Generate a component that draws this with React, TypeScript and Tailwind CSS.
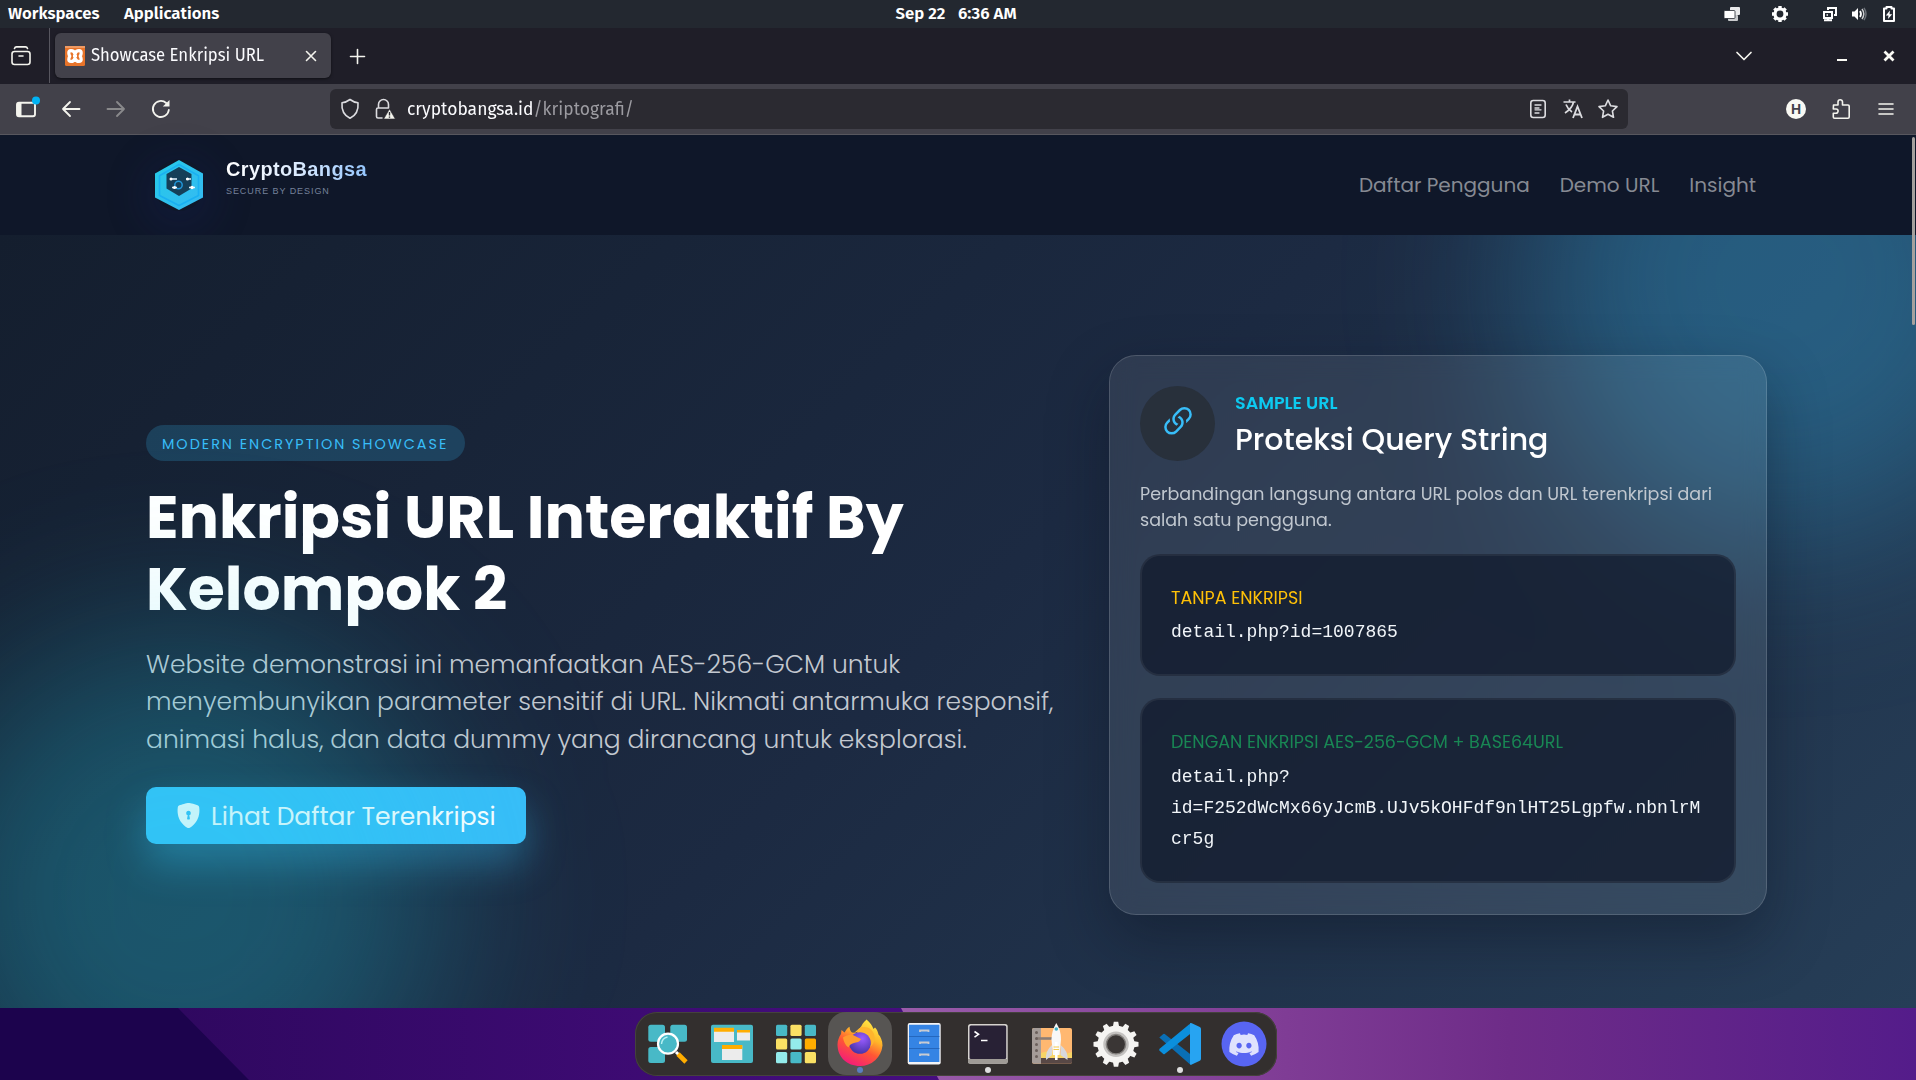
import type { ReactNode } from 'react'
import { BsLink45Deg, BsShieldLockFill } from 'react-icons/bs'
import { FaDiscord } from 'react-icons/fa'

const line = { fill: 'none', stroke: '#f4f4ee', strokeWidth: 1.6, strokeLinecap: 'round', strokeLinejoin: 'round' } as const

function TopBar() {
  return (
    <div className="grid h-7 grid-cols-[1fr_auto_1fr] items-center bg-[#232830] text-[16.800px] leading-[26px] font-semibold text-white">
      <div className="flex gap-[24.500px] pb-0.5 pl-2">
        <span>Workspaces</span>
        <span>Applications</span>
      </div>
      <div className="flex gap-[12.500px] pr-[4px] pb-0.5">
        <span>Sep 22</span>
        <span>6:36 AM</span>
      </div>
      <div className="flex items-center justify-end pr-[20px]">
        <svg width="16" height="16" viewBox="0 0 16 16" className="mr-8">
          <rect x="6" y="1" width="10" height="8" rx="1" fill="#e8e9ea" />
          <rect x="4" y="9" width="10" height="6" rx="1" fill="#c9cbcd" />
          <rect x="0" y="4.500" width="11" height="8" rx="1" fill="#fff" stroke="#232830" strokeWidth=".8" />
        </svg>
        <svg width="16" height="16" viewBox="-8 -8 16 16" className="mr-[34px]">
          <circle r="5" fill="none" stroke="#fff" strokeWidth="3.200" />
          {[0, 45, 90, 135].map((a) => (
            <path key={a} d="M0-8V-5.500M0 5.500V8" stroke="#fff" strokeWidth="3.400" transform={`rotate(${a})`} />
          ))}
        </svg>
        <svg width="16" height="16" viewBox="0 0 16 16" className="mr-[14px]" fill="none" stroke="#fff" strokeWidth="2">
          <path d="M6 4V2h8v7h-2" />
          <rect x="2" y="6" width="8" height="6" />
          <path d="M2 14.200h8M6 12v2" />
          <path d="M4.500 9h1.500" strokeWidth="1.500" />
        </svg>
        <svg width="16" height="16" viewBox="0 0 16 16" className="mr-[14px]">
          <path d="M0 5.500h2.500L6 2v12l-3.500-3.500H0z" fill="#fff" />
          <path d="M8 5q2 3 0 6" fill="none" stroke="#fff" strokeWidth="1.800" />
          <path d="M10 3q3.600 5 0 10" fill="none" stroke="#c9cbcd" strokeWidth="1.500" />
          <path d="M12 1.800q4 6.200 0 12.400" fill="none" stroke="#6b7077" strokeWidth="1.500" />
        </svg>
        <svg width="14" height="16" viewBox="0 0 14 16">
          <path d="M4.500 1h5v1.500H12V15H2V2.500h2.500z" fill="none" stroke="#fff" strokeWidth="2" strokeLinejoin="round" />
          <path d="M8 4.500L3.800 9.500h2.700L6 13l4.200-4.800H7.500z" fill="#fff" />
        </svg>
      </div>
    </div>
  )
}

function TabStrip() {
  return (
    <div className="flex h-14 bg-[#1f1e28]">
      <div className="flex h-[55px] w-[50px] shrink-0 items-center justify-end border-r border-[#57565f] pr-[17px]">
        <svg width="22" height="22" viewBox="0 0 22 22" className="mt-px">
          <rect x="2" y="6.500" width="18" height="13" rx="2.500" {...line} />
          <path d="M4.500 3.500q.5-1.600 2-1.600h9q1.500 0 2 1.600M9 11h4" {...line} />
        </svg>
      </div>
      <div className="mt-[5px] ml-[5px] flex h-[45px] w-[276px] items-center rounded-[6px] bg-[#42414a] pl-[10px] shadow-[0_1px_3px_rgba(0,0,0,.5)]">
        <svg width="20" height="20" viewBox="0 0 20 20">
          <rect width="20" height="20" rx="1.500" fill="#e8742a" />
          <rect width="20" height="2" fill="#ee9a63" />
          <g fill="none" stroke="#fff" strokeWidth="3.200" strokeLinejoin="round">
            <path d="M10 8q-1-3.300-4-3.300-2.200 0-2.200 2.200 0 1.600 1 3.200-1 1.600-1 3.200 0 2.200 2.200 2.200 3 0 4-3.300 1 3.300 4 3.300 2.200 0 2.200-2.200 0-1.600-1-3.200 1-1.600 1-3.200 0-2.200-2.200-2.200-3 0-4 3.300z" />
            <path d="M8 10h4" strokeWidth="2.500" />
          </g>
        </svg>
        <span className="mt-px ml-[6px] flex-1 scale-y-[1.07] text-[16.700px] text-[#fbfbfe]">Showcase Enkripsi URL</span>
        <svg width="12" height="12" viewBox="0 0 12 12" className="mr-[14.500px]">
          <path d="M1.500 1.500l9 9M10.500 1.500l-9 9" {...line} />
        </svg>
      </div>
      <svg width="17" height="17" viewBox="0 0 17 17" className="mt-5 ml-[18px]">
        <path d="M8.500 1.500v14M1.500 8.500h14" {...line} />
      </svg>
      <div className="flex flex-1 items-center justify-end pr-[21px]">
        <svg width="18" height="12" viewBox="0 0 18 12" className="mr-[84px]">
          <path d="M2 2.500l7 7 7-7" {...line} strokeWidth="1.700" />
        </svg>
        <span className="mt-2 mr-9 h-[2.500px] w-[10px] bg-[#fafaf5]" />
        <svg width="12" height="12" viewBox="0 0 12 12">
          <path d="M1.500 1.500l9 9M10.500 1.500l-9 9" fill="none" stroke="#fafaf5" strokeWidth="2.800" />
        </svg>
      </div>
    </div>
  )
}

function Toolbar() {
  return (
    <div className="flex h-[51px] items-center border-b border-[#58575e] bg-[#42414a]">
      <div className="flex w-[330px] shrink-0 items-center pl-[14px]">
        <svg width="28" height="24" viewBox="0 0 28 24" className="mb-[3px]">
          <rect x="3" y="6.800" width="18" height="13.500" rx="2" {...line} strokeWidth="1.900" />
          <path d="M3 7h4.500v13H3z" fill="#f4f4ee" />
          <circle cx="22" cy="4.500" r="4" fill="#00b3f4" />
        </svg>
        <svg width="20" height="18" viewBox="0 0 20 18" className="ml-[19px]">
          <path d="M18.500 9H2M9 2L2 9l7 7" {...line} strokeWidth="1.800" />
        </svg>
        <svg width="20" height="18" viewBox="0 0 20 18" className="ml-[25px] opacity-40">
          <path d="M1.500 9H18M11 2l7 7-7 7" {...line} strokeWidth="1.800" />
        </svg>
        <svg width="20" height="20" viewBox="0 0 20 20" className="ml-[25px]">
          <path d="M17.800 11a8 8 0 1 1-2.600-7" {...line} strokeWidth="1.800" />
          <path d="M18.500 1v6.500h-6.700z" fill="#f4f4ee" />
        </svg>
      </div>
      <div className="flex h-10 w-[1298px] items-center rounded-[6px] bg-[#2b2a31] pl-[10px]">
        <svg width="20" height="22" viewBox="0 0 20 22">
          <path d="M10 1.500q3.500 2.700 8 3.200 1 11-8 15.600Q1 15.700 2 4.700q4.500-.5 8-3.200z" {...line} stroke="#dcdce0" />
        </svg>
        <svg width="22" height="22" viewBox="0 0 22 22" className="ml-[13.500px]">
          <path d="M4.500 10V6.500a5 5 0 0 1 10 0V10M8 20H4q-1.500 0-1.500-1.500v-7Q2.500 10 4 10h10" {...line} stroke="#dcdce0" />
          <path d="M15.500 11l5.800 10H9.700z" fill="#f4f4ee" stroke="#2b2a31" strokeWidth=".6" />
          <path d="M15.500 14v3.500M15.500 18.600v1.200" stroke="#2b2a31" strokeWidth="1.400" />
        </svg>
        <div className="mt-[2px] ml-[11.500px] flex-1 scale-y-[1.04] text-[17.500px] text-[#fbfbfe]">
          cryptobangsa.id<span className="text-[#9c9ba1]">/kriptografi/</span>
        </div>
        <svg width="20" height="20" viewBox="0 0 20 20" className="mr-[14px]">
          <rect x="2.800" y="1.500" width="14.400" height="17" rx="2.500" {...line} stroke="#dcdce0" />
          <path d="M7 6h6M7 9h4M7 10.800h6M7 14h4" {...line} stroke="#dcdce0" strokeWidth="1.300" />
        </svg>
        <svg width="22" height="22" viewBox="0 0 22 22" className="mr-[13px]" fill="none" stroke="#dcdce0" strokeWidth="1.700">
          <path d="M1.500 4h12M7.500 1.500V4M11.500 4q-1 6-8.500 11M4 6.500q2 5 6 7.500" />
          <path d="M11 20l4.500-11.500L20 20M12.500 16.500h6" strokeWidth="1.800" />
        </svg>
        <svg width="22" height="22" viewBox="0 0 22 22" className="mr-[9px]">
          <path d="M11 2l2.700 5.800 6.300.8-4.600 4.400 1.100 6.300L11 16.200l-5.500 3.100 1.100-6.300L2 8.600l6.300-.8z" {...line} stroke="#dcdce0" />
        </svg>
      </div>
      <div className="flex flex-1 items-center justify-end pr-[22px]">
        <span className="mr-[24px] flex size-5 items-center justify-center rounded-full bg-[#f9f9f4] font-['Liberation_Sans'] text-[14px] leading-none font-bold text-[#42414a]">H</span>
        <svg width="22" height="22" viewBox="0 0 22 22" className="mr-[26px]">
          <path d="M3.500 7H8V4a2.200 2.200 0 0 1 4.500 0v3H18q1.200 0 1.200 1.200V19q0 1.200-1.200 1.200H4.500q-1.200 0-1.200-1.200v-3.800H6a2 2 0 0 0 0-4.200H3.300z" {...line} />
        </svg>
        <svg width="16" height="14" viewBox="0 0 16 14" className="mb-px">
          <path d="M1 2h14M1 7h14M1 12h14" {...line} />
        </svg>
      </div>
    </div>
  )
}

function Logo() {
  return (
    <div className="flex">
      <div className="mt-[24px] size-[52px] rounded-full shadow-[0_10px_36px_14px_rgba(24,34,100,.2)]">
        <svg width="52" height="52" viewBox="0 0 52 52">
          <defs>
            <linearGradient id="hex" x1="0" y1="0" x2="1" y2="1">
              <stop offset="0" stopColor="#25cbe8" />
              <stop offset="1" stopColor="#36b9f2" />
            </linearGradient>
          </defs>
          <path d="M26 1l24 13.500v24L26 51 2 38.500v-24z" fill="url(#hex)" />
          <path d="M26 5.500l19.500 11.200v19.700L26 46.500 6.500 36.400V16.700z" fill="none" stroke="#1ab0f2" strokeWidth="1.600" />
          <path d="M26 8l12.500 7v14.500L26 37l-12.500-7.500V15z" fill="#153f58" />
          <circle cx="25.500" cy="26" r="3.700" fill="none" stroke="#2196d8" strokeWidth="1.500" />
          <g stroke="#e2f5ff" strokeWidth="1.500" fill="#fff">
            <path d="M18 20h6M33 20h5M19 28.500h5M36 28.500h6" />
            <circle cx="18" cy="20" r="1.500" stroke="none" />
            <circle cx="34.500" cy="20" r="1.500" stroke="none" />
            <circle cx="21.500" cy="28.500" r="1.500" stroke="none" />
            <circle cx="39" cy="28.500" r="1.700" stroke="none" />
          </g>
        </svg>
      </div>
      <div className="mt-[22px] ml-[21px] font-['Liberation_Sans']">
        <div className="w-[142px] bg-linear-to-r from-white via-[#dbeafe] to-[#93c5fd] bg-clip-text text-[20px] leading-6 font-bold tracking-[.35px] text-transparent">CryptoBangsa</div>
        <div className="mt-[4px] text-[9px] leading-3 tracking-[.93px] text-[#75819a]">SECURE BY DESIGN</div>
      </div>
    </div>
  )
}

function SampleBox({ label, tone, children }: { label: string; tone: string; children: ReactNode }) {
  return (
    <div className="rounded-[20px] border-2 border-white/6 bg-[#0f172a]/72 px-[29px] pt-[29px] pb-[26px]">
      <div className={`text-[17.500px] leading-[26.250px] ${tone}`}>{label}</div>
      <div className="mt-[6.500px] font-['Liberation_Mono'] text-[18px] leading-[31px] text-[#f1f5f9]">{children}</div>
    </div>
  )
}

function Hero() {
  return (
    <main className="relative isolate flex h-[773px] overflow-hidden bg-linear-135 from-[#141e2e] via-[#1c2a42] to-[#263e57] px-[146px]">
      <div className="pointer-events-none absolute -top-[215px] -right-[125px] -z-10 size-[520px] rounded-full bg-[#38bdf8]/31 blur-[85px]" />
      <div className="mt-[190px] w-[963px]">
        <div className="flex h-9 w-[319px] items-center rounded-full bg-[#38bdf8]/20 pt-[3px] pl-4 text-[14.400px] tracking-[1.970px] whitespace-nowrap text-[#38bdf8]">MODERN ENCRYPTION SHOWCASE</div>
        <h1 className="mt-5 text-[60px] leading-[72px] font-bold text-white">
          Enkripsi URL Interaktif By
          <br />
          Kelompok 2
        </h1>
        <p className="mt-[20.600px] text-[25px] leading-[37.500px] font-light whitespace-nowrap text-[#c3c8d0]">
          Website demonstrasi ini memanfaatkan AES-256-GCM untuk
          <br />
          menyembunyikan parameter sensitif di URL. Nikmati antarmuka responsif,
          <br />
          animasi halus, dan data dummy yang dirancang untuk eksplorasi.
        </p>
        <button className="mt-[29.400px] flex h-[57px] w-[380px] items-center rounded-[10px] bg-[#38bdf8] pt-px pl-[30px] text-[25px] whitespace-nowrap text-white shadow-[0_20px_38px_rgba(56,189,248,.35)]">
          <BsShieldLockFill className="mr-[10px] mb-[2px] size-[25px]" />
          Lihat Daftar Terenkripsi
        </button>
      </div>
      <section className="mt-[120px] h-[560px] w-[658px] shrink-0 rounded-[27px] border border-white/15 bg-white/[.085] p-[30px] shadow-[0_25px_60px_rgba(10,16,30,.38)] backdrop-blur-[12px]">
        <div className="flex items-center gap-5">
          <div className="flex size-[75px] items-center justify-center rounded-full bg-[#28303b]">
            <BsLink45Deg className="mb-[3px] size-[40px] text-[#38bdf8]" />
          </div>
          <div>
            <div className="text-[17.500px] leading-[26.250px] font-semibold text-[#0dcaf0]">SAMPLE URL</div>
            <h2 className="mt-[6px] -mb-px text-[30px] leading-9 font-medium text-white">Proteksi Query String</h2>
          </div>
        </div>
        <p className="mt-5 mb-[20px] text-[17.500px] leading-[26.250px] whitespace-nowrap text-[#c0c7cf]">
          Perbandingan langsung antara URL polos dan URL terenkripsi dari
          <br />
          salah satu pengguna.
        </p>
        <div className="flex flex-col gap-[21.500px]">
          <SampleBox label="TANPA ENKRIPSI" tone="text-[#ffc107]">detail.php?id=1007865</SampleBox>
          <SampleBox label="DENGAN ENKRIPSI AES-256-GCM + BASE64URL" tone="text-[#198754]">
            detail.php?
            <br />
            id=F252dWcMx66yJcmB.UJv5kOHFdf9nlHT25Lgpfw.nbnlrM
            <br />
            cr5g
          </SampleBox>
        </div>
      </section>
      <div className="pointer-events-none absolute -bottom-[147px] -left-[80px] size-[520px] rounded-full bg-[#22d3ee]/28 blur-[90px]" />
    </main>
  )
}

function Cell({ active, dot, children }: { active?: boolean; dot?: string; children: ReactNode }) {
  return (
    <svg width="64" height="63" viewBox="0 0 64 63" className={active ? 'rounded-[18px] bg-[#575553]' : ''}>
      {children}
      {dot && <circle cx="32" cy="58" r="3" fill={dot} />}
    </svg>
  )
}

const grid = ['#48b9c7', '#fae064', '#48b9c7', '#fae064', '#94ebeb', '#ffad00', '#94ebeb', '#48b9c7', '#fae064']

function Dock() {
  return (
    <div className="flex h-[64px] w-[642px] rounded-[22px] bg-[#332f2e] px-px inset-ring inset-ring-[#45423d]">
      <Cell>
        <g fill="#48b9c7">
          <rect x="12.300" y="12.700" width="16.700" height="17" rx="2.500" />
          <rect x="34.300" y="12.700" width="16.700" height="17" rx="2.500" />
          <rect x="12.300" y="35" width="16.700" height="16" rx="2.500" />
        </g>
        <path d="M40 40l3 3" stroke="#fff" strokeWidth="3" />
        <path d="M42 42l8 8" stroke="#ffad00" strokeWidth="4.600" />
        <circle cx="32" cy="31.700" r="10" fill="#48b9c7" stroke="#fff" strokeWidth="2.200" />
        <path d="M25.500 32q.5-6 6-7" fill="none" stroke="#b8f2f4" strokeWidth="1.400" />
      </Cell>
      <Cell>
        <rect x="11" y="12.700" width="42" height="38.300" rx="2" fill="#48b9c7" />
        <path d="M14 16h20v14H14zM37 18.500h13v10H37zM22 33.500h20.300V48H22z" fill="#ececec" />
        <path d="M14 15.700h20v4H14zM37 18h13v2.500H37zM22 33h20.300v4H22z" fill="#ffad00" />
      </Cell>
      <Cell>
        {grid.map((c, i) => (
          <rect key={i} x={12 + (i % 3) * 14.4} y={12.7 + Math.floor(i / 3) * 13.7} width="11.200" height="11.200" rx="1.500" fill={c} />
        ))}
      </Cell>
      <Cell active dot="#5b7fc0">
        <defs>
          <linearGradient id="ffx" x1=".8" y1="0" x2=".3" y2="1">
            <stop offset="0" stopColor="#fff04a" />
            <stop offset=".35" stopColor="#ffb629" />
            <stop offset=".62" stopColor="#ff5634" />
            <stop offset="1" stopColor="#f31a7c" />
          </linearGradient>
          <radialGradient id="ffg" cx=".6" cy=".3" r=".8">
            <stop offset="0" stopColor="#9a5cff" />
            <stop offset="1" stopColor="#3d2f9e" />
          </radialGradient>
        </defs>
        <path d="M38.500 7.500c3.500 3 5.800 6 7 9.500l1.500-1.500c2 2 3 4.500 3.500 7 2 2 4 6 4 11A22.500 22.500 0 0 1 32 54C19 54 9.500 45 9.500 32.500c0-4 1.500-7.500 3.500-10.500l.5-4 3 2.500c1.500-2.500 3-4.500 5-5.700.3 3 1 4.500 2.500 5.700l5 .5c1.500-4 4.500-6.500 5.500-9 .9-1.500 2.500-3 4-4.500z" fill="url(#ffx)" />
        <circle cx="32" cy="31" r="10.800" fill="url(#ffg)" />
        <path d="M15 25.500c5-3.500 9-3.500 12-1.500l6 3c-1 3-4.500 3.500-7 4-3 1-5 2-5.500 4.500-3-2-5-6-5.500-10z" fill="#ff9b2f" />
        <path d="M26 21c4-2.500 10-2 14 1 4 3.300 4.500 9 2 13 6-4 6-13 1-17.500-4-3-9-3-12-1z" fill="#ffb52d" />
      </Cell>
      <Cell>
        <rect x="15.700" y="11" width="33" height="41.500" rx="2" fill="#f4f4f6" />
        <path d="M17 12.700h30.400V50H17z" fill="#3584e4" />
        <path d="M17 24.500h30.400M17 36.500h30.400" stroke="#2467be" strokeWidth="1" />
        <path d="M28 20v-1.500h8.500V20M28 32v-1.500h8.500V32M28 44v-1.500h8.500V44" fill="none" stroke="#c8cbd2" strokeWidth="1.800" />
      </Cell>
      <Cell dot="#dedede">
        <rect x="12" y="12" width="39.700" height="39.700" rx="2.500" fill="#d6d3cf" />
        <path d="M12 47h39.700v2.500q0 2.200-2.500 2.200H14.500Q12 51.700 12 49.500z" fill="#9f9b96" />
        <rect x="13.500" y="13.500" width="36.700" height="33.500" rx="1.500" fill="#282135" />
        <path d="M18.500 19.500l4 2.800-4 2.800M25 28.500h6.500" fill="none" stroke="#fff" strokeWidth="1.600" />
      </Cell>
      <Cell>
        <rect x="12" y="16" width="40" height="35.700" rx="2" fill="#ffb871" />
        <path d="M21 41q8-3 16-.5t15-.5v6H21z" fill="#f8d566" />
        <path d="M21 46h31v4q0 1.700-2 1.700H21z" fill="#584846" />
        <path d="M14 16h7v35.700h-7q-2 0-2-2V18q0-2 2-2z" fill="#a59c98" />
        <path d="M16 26.500h18" stroke="#8a7d76" strokeWidth="2.600" />
        {[20.5, 26.5, 32.5, 38.5, 44.5].map((y) => (
          <circle key={y} cx="16.500" cy={y} r="1.500" fill="#6b605c" />
        ))}
        <path d="M32 33q-7 6-6 15l6-5zM40.500 33q8 6 7 15l-7-5z" fill="#d8d8dc" />
        <path d="M36.300 11q5 8 4.700 16.500L39.500 43h-6.500L31.500 27.500Q31.500 19 36.300 11z" fill="#f8f8f8" />
        <path d="M36.300 30v18" stroke="#fff" strokeWidth="2.600" />
        <circle cx="36.300" cy="17" r="1.800" fill="#3fb2c6" />
        <path d="M33.500 35h5.600M33.500 37.500h5.600" stroke="#f2c94c" strokeWidth="1" />
      </Cell>
      <Cell>
        <g transform="translate(32 32.300)">
          {Array.from({ length: 12 }, (_, i) => (
            <path key={i} d="M-3.200-17L-2.200-22.500H2.200L3.200-17z" fill="#f5f4f2" transform={`rotate(${i * 30})`} />
          ))}
          <circle r="14" fill="none" stroke="#f5f4f2" strokeWidth="9" />
          <circle r="11.500" fill="none" stroke="#c4c2c0" strokeWidth="2.500" />
          <circle r="9.700" fill="#3a3635" stroke="#85827f" strokeWidth="1.500" />
        </g>
      </Cell>
      <Cell dot="#dedede">
        <path d="M11.300 25.500l4-3.500q.7-.5 1.400 0L44 43.500V52q-1.500.8-3-.6L11.300 25.500z" fill="#0a6fb5" />
        <path d="M11.300 38.500l4 3.500q.7.500 1.400 0L44 20.500V12q-1.500-.8-3 .6L11.300 37z" fill="#0b8fdd" />
        <path d="M42 11.200q.8-.5 1.800 0l8 3.800q1.200.6 1.200 2v29.800q0 1.400-1.200 2l-8 3.800q-1 .5-1.800 0z" fill="#27a4f2" />
      </Cell>
      <Cell>
        <circle cx="32" cy="32" r="22.500" fill="#5865f2" />
        <svg x="16" y="16.500" width="32" height="32" viewBox="0 0 16 16">
          <FaDiscord size={16} color="#dfe2fd" />
        </svg>
      </Cell>
    </div>
  )
}

function Wallpaper() {
  return (
    <div className="relative isolate flex h-[72px] justify-center overflow-hidden pt-1 pr-[4px]">
      <svg width="1916" height="72" viewBox="0 0 1916 72" className="absolute inset-0 -z-10">
        <defs>
          <linearGradient id="w1">
            <stop offset="0" stopColor="#2f0860" />
            <stop offset="1" stopColor="#470d80" />
          </linearGradient>
          <linearGradient id="w2">
            <stop offset="0" stopColor="#9a5caa" />
            <stop offset=".38" stopColor="#7f3c95" />
            <stop offset=".6" stopColor="#6e2c88" />
            <stop offset="1" stopColor="#541c8a" />
          </linearGradient>
        </defs>
        <rect width="1916" height="72" fill="#1c034d" />
        <path d="M178 0H960v72H249z" fill="url(#w1)" />
        <path d="M901 0H1916V72H939z" fill="url(#w2)" />
      </svg>
      <Dock />
    </div>
  )
}

export default function App() {
  return (
    <div className="relative h-[1080px] w-[1916px] overflow-hidden bg-[#0f1729] font-['Fira_Sans','Open_Sans',sans-serif]">
      <TopBar />
      <TabStrip />
      <Toolbar />
      <div className="font-['Poppins','Inter',sans-serif]">
        <header className="flex h-[100px] justify-between bg-[#0f1729] pr-[160px] pl-[153px]">
          <Logo />
          <nav className="flex items-center gap-[30px] text-[20px] text-[#868a93]">
            <span>Daftar Pengguna</span>
            <span>Demo URL</span>
            <span>Insight</span>
          </nav>
        </header>
        <Hero />
      </div>
      <Wallpaper />
      <div className="absolute top-[137px] right-px h-[188px] w-[3px] rounded-full bg-[#a5a19e]" />
    </div>
  )
}
